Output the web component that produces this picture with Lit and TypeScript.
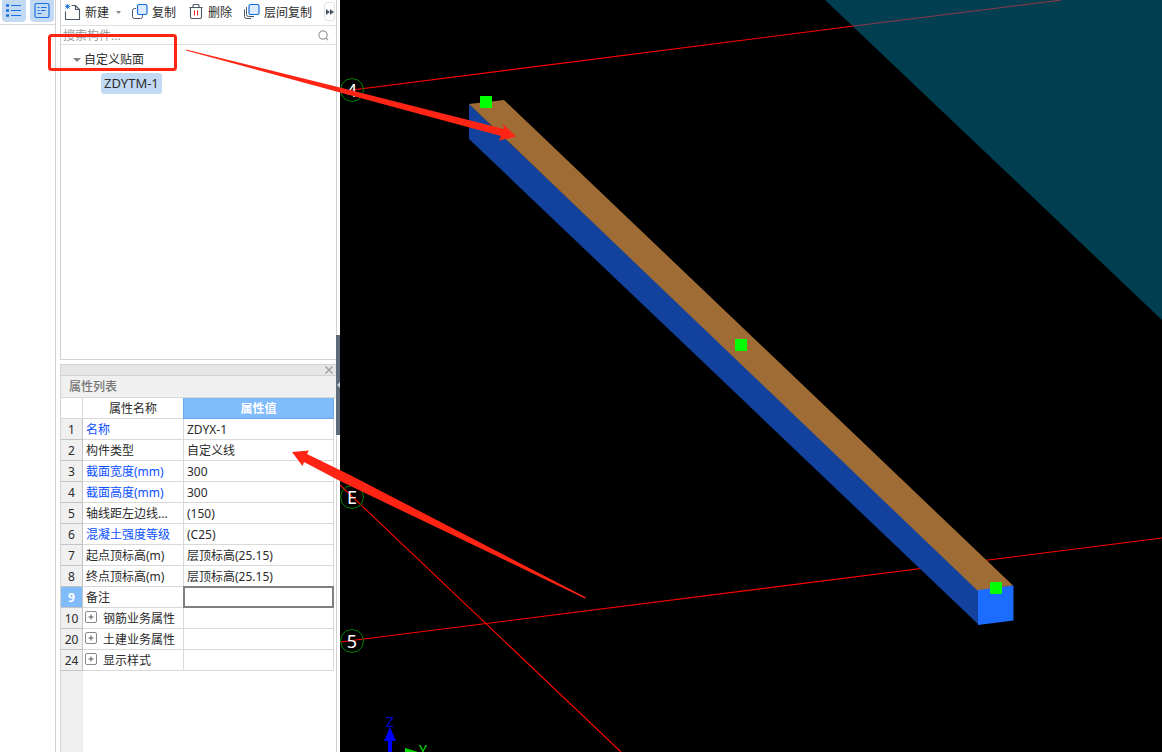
import { LitElement, html, css, svg, nothing } from "lit";
import { customElement, property, state } from "lit/decorators.js";

interface Row {
  no: number;
  name: string;
  value: string;
  key?: boolean;
  group?: boolean;
}

const ROWS: Row[] = [
  { no: 1, name: "名称", value: "ZDYX-1", key: true },
  { no: 2, name: "构件类型", value: "自定义线" },
  { no: 3, name: "截面宽度(mm)", value: "300", key: true },
  { no: 4, name: "截面高度(mm)", value: "300", key: true },
  { no: 5, name: "轴线距左边线...", value: "(150)" },
  { no: 6, name: "混凝土强度等级", value: "(C25)", key: true },
  { no: 7, name: "起点顶标高(m)", value: "层顶标高(25.15)" },
  { no: 8, name: "终点顶标高(m)", value: "层顶标高(25.15)" },
  { no: 9, name: "备注", value: "" },
  { no: 10, name: "钢筋业务属性", value: "", group: true },
  { no: 20, name: "土建业务属性", value: "", group: true },
  { no: 24, name: "显示样式", value: "", group: true },
];

const reset = css`
  * { box-sizing: border-box; }
  button, input {
    font: inherit;
    color: inherit;
    background: none;
    border: 0;
    padding: 0;
    margin: 0;
    outline: 0;
  }
  svg { display: block; flex: none; }
`;

@customElement("view-rail")
class ViewRail extends LitElement {
  static styles = [reset, css`
    :host {
      display: block;
      background: #fff;
      border-right: 1px solid #d2d2d2;
    }
    .bar {
      display: flex;
      gap: 4px;
      height: 25px;
      padding-left: 2px;
      border-bottom: 1px solid #d9d9d9;
    }
    .toggle {
      display: grid;
      place-items: center;
      width: 24px;
      height: 22px;
      border-radius: 0 0 4px 4px;
      background: #c2daf3;
    }
  `];

  render() {
    return html`
      <div class="bar">
        <button class="toggle" aria-label="构件列表" aria-pressed="true">
          <svg width="18" height="20" viewBox="0 0 18 20" fill="none" stroke="#1a6fe0">
            <path d="M1 4.500h3M1 9.500h3M1 14.500h3" stroke-width="2.600" />
            <path d="M6 4.500H16M6 9.500H16M6 14.500H16" />
          </svg>
        </button>
        <button class="toggle" aria-label="属性列表" aria-pressed="true">
          <svg width="16" height="20" viewBox="0 0 16 20" fill="none" stroke="#1a6fe0">
            <rect x="1" y="2.500" width="14" height="14" rx="1.500" stroke-width="1.200" />
            <path d="M3.500 6.500h2M7 6.500h5.500M3.500 9.500h2M7 9.500h4.500M3.500 12.500h4" />
          </svg>
        </button>
      </div>
    `;
  }
}

@customElement("component-list")
class ComponentList extends LitElement {
  static styles = [reset, css`
    :host {
      display: flex;
      flex-direction: column;
      background: #fff;
      border: 1px solid #d2d2d2;
      border-top: 0;
    }
    .tools {
      display: flex;
      align-items: center;
      height: 26px;
      padding-left: 3px;
      border-bottom: 1px solid #e0e0e0;
      white-space: nowrap;
    }
    .tool {
      display: flex;
      align-items: center;
      gap: 4px;
      margin-right: 12px;
    }
    .tool svg { margin-bottom: 2px; }
    .tool.new { margin-right: 11px; }
    .caret {
      width: 5px;
      height: 3px;
      margin-left: 3px;
      background: #888;
      clip-path: polygon(0 0, 100% 0, 50% 100%);
    }
    .more {
      display: grid;
      place-items: center;
      width: 11px;
      height: 19px;
      margin: 0 1px 2px auto;
      border: 1px solid #e4e4e4;
      border-radius: 3px;
    }
    .search {
      display: flex;
      align-items: center;
      height: 19px;
      padding: 1px 7px 0 2px;
      border-bottom: 1px solid #e0e0e0;
    }
    .query { flex: 1; min-width: 0; height: 17px; }
    .query::placeholder { color: #9a9a9a; opacity: 1; }
    .tree {
      margin: 0;
      padding: 5px 0 0 12px;
      list-style: none;
    }
    .parent { display: flex; align-items: center; gap: 3px; height: 20px; }
    .fold {
      width: 8px;
      height: 4px;
      background: #808080;
      clip-path: polygon(0 0, 100% 0, 50% 100%);
    }
    .children { margin: 0; padding: 3px 0 0 28px; list-style: none; }
    .item {
      height: 21px;
      padding: 0 3px;
      border-radius: 3px;
      background: #c2daf3;
      font-size: 13px;
      line-height: 21px;
    }
  `];

  render() {
    return html`
      <div class="tools">
        <button class="tool new">
          <svg width="17" height="18" viewBox="0 0 17 18" fill="none">
            <path d="M7.500 2.500H11.500L15.500 6.500V16.500H1.500V8.500M11.500 2.500V6.500H15.500" stroke="#4b5666" stroke-width="1.100" />
            <path d="M3.500 1v5M1 3.500h5M1.500 1.500l4 4M5.500 1.500l-4 4" stroke="#2273d8" stroke-width=".9" />
          </svg>
          新建<span class="caret"></span>
        </button>
        <button class="tool">
          <svg width="16" height="17" viewBox="0 0 16 17" fill="none">
            <path d="M4 5.500H2.500a2 2 0 0 0-2 2V13.500a2 2 0 0 0 2 2H8.500a2 2 0 0 0 2-2V12" stroke="#4b5666" />
            <rect x="5.500" y="1.500" width="9.500" height="10" rx="1.500" fill="#dcecff" stroke="#1a6fe0" stroke-width="1.200" />
          </svg>
          复制
        </button>
        <button class="tool">
          <svg width="16" height="17" viewBox="0 0 16 17" fill="none">
            <path d="M1.500 4.500h13M5 4V2.500q0-1 1-1H10q1 0 1 1V4M2.500 5V14q0 1.500 1.500 1.500h8q1.500 0 1.500-1.500V5" stroke="#4b5666" stroke-width="1.100" />
            <path d="M6.500 7.500v5M9.500 7.500v5" stroke="#e02020" />
          </svg>
          删除
        </button>
        <button class="tool">
          <svg width="16" height="17" viewBox="0 0 16 17" fill="none">
            <path d="M.5 6.500v7q0 2 2 2H7M2.500 4v7.500q0 2 2 2H10" stroke="#4b5666" />
            <rect x="5" y="1.500" width="10" height="10" rx="1.500" fill="#dcecff" stroke="#1a6fe0" stroke-width="1.200" />
          </svg>
          层间复制
        </button>
        <button class="more" aria-label="更多">
          <svg width="8" height="6" viewBox="0 0 8 6" fill="#4b5666">
            <path d="M0 0l4 3-4 3zM4 0l4 3-4 3z" />
          </svg>
        </button>
      </div>
      <label class="search">
        <input class="query" type="text" placeholder="搜索构件..." aria-label="搜索构件" />
        <svg width="11" height="11" viewBox="0 0 12 12" fill="none" stroke="#9a9a9a" stroke-width="1.300">
          <circle cx="5.500" cy="5.500" r="4.500" /><path d="M8.500 8.500l2.500 2.500" />
        </svg>
      </label>
      <ul class="tree">
        <li>
          <button class="parent" aria-expanded="true"><span class="fold"></span>自定义贴面</button>
          <ul class="children">
            <li><button class="item">ZDYTM-1</button></li>
          </ul>
        </li>
      </ul>
    `;
  }
}

@customElement("property-list")
class PropertyList extends LitElement {
  @state() private current = 9;

  static styles = [reset, css`
    :host {
      display: flex;
      flex-direction: column;
      background: #fff;
      border: 1px solid #d2d2d2;
      border-bottom: 0;
    }
    .grip {
      display: flex;
      align-items: center;
      justify-content: flex-end;
      height: 11px;
      padding-right: 3px;
      background: #e6e6e6;
      border-bottom: 1px solid #d2d2d2;
    }
    .title {
      height: 22px;
      margin: 0;
      padding-left: 8px;
      background: #f0f0f0;
      border-bottom: 1px solid #d9d9d9;
      color: #777;
      font-size: 12px;
      font-weight: 500;
      line-height: 21px;
    }
    .body {
      flex: 1;
      padding-right: 2px;
      background: linear-gradient(90deg, #f0f0f0 22px, #fff 22px);
    }
    .grid {
      width: 100%;
      table-layout: fixed;
      border-collapse: separate;
      border-spacing: 0;
    }
    .c-no { width: 22px; }
    .c-name { width: 101px; }
    th, td {
      height: 21px;
      padding: 2px 3px 0;
      border-right: 1px solid #d9d9d9;
      border-bottom: 1px solid #d9d9d9;
      background: #fff;
      font-weight: 400;
      line-height: 18px;
      text-align: left;
      white-space: nowrap;
    }
    thead th { text-align: center; }
    thead .active {
      background: #80bbfb;
      border-color: #68a8ee;
      box-shadow: -1px 0 #68a8ee;
      color: #fff;
      font-weight: 700;
    }
    tbody th {
      padding: 2px 0 0;
      background: #f0f0f0;
      border-color: #c4c4c4;
      text-align: center;
    }
    tbody .on { background: #80bbfb; color: #fff; font-weight: 700; }
    .key { color: #0a50ff; }
    .edit { padding: 0; }
    .field {
      display: block;
      position: relative;
      width: calc(100% + 2px);
      height: 22px;
      margin: -1px;
      padding: 0 3px;
      border: 2px solid #808080;
    }
    .group { display: flex; align-items: center; gap: 6px; height: 18px; }
    .plus {
      display: grid;
      place-items: center;
      width: 12px;
      height: 12px;
      margin: 0 0 4px -1px;
      border: 1px solid #888;
      border-radius: 2px;
    }
  `];

  private row(r: Row) {
    const on = r.no === this.current;
    return html`
      <tr>
        <th scope="row" class=${on ? "on" : nothing}>${r.no}</th>
        <td class=${r.key ? "key" : nothing}>
          ${r.group
            ? html`<div class="group">
                <button class="plus" aria-label="展开">
                  <svg width="6" height="6" viewBox="0 0 6 6" stroke="#555"><path d="M3 .5v5M.5 3h5" /></svg>
                </button><span>${r.name}</span>
              </div>`
            : r.name}
        </td>
        ${on
          ? html`<td class="edit"><input class="field" type="text" aria-label=${r.name} .value=${r.value} /></td>`
          : html`<td>${r.value}</td>`}
      </tr>
    `;
  }

  render() {
    return html`
      <div class="grip">
        <button aria-label="关闭">
          <svg width="8" height="8" viewBox="0 0 8 8" stroke="#999" stroke-width="1.100"><path d="M.5 .5l7 7M7.500 .5l-7 7" /></svg>
        </button>
      </div>
      <h2 class="title">属性列表</h2>
      <div class="body">
        <table class="grid">
          <colgroup><col class="c-no" /><col class="c-name" /><col /></colgroup>
          <thead>
            <tr><th></th><th>属性名称</th><th class="active">属性值</th></tr>
          </thead>
          <tbody>${ROWS.map((r) => this.row(r))}</tbody>
        </table>
      </div>
    `;
  }
}

@customElement("model-view")
class ModelView extends LitElement {
  static styles = css`
    :host { display: block; min-width: 0; background: #000; overflow: hidden; }
    .scene { display: block; }
    .label {
      fill: #fff;
      font: 18px "Noto Sans", "Open Sans", sans-serif;
      text-anchor: middle;
    }
    .axis { font: 14px "Noto Sans", "Open Sans", sans-serif; text-anchor: middle; }
  `;

  private bubble(text: string, y: number) {
    return svg`
      <path d="M12 ${y - 11.5}l6 1.500 4 4 1.500 6-1.500 6-4 4-6 1.500-6-1.500-4-4-1.500-6 1.500-6 4-4z" fill="none" stroke="#008000" />
      <text class="label" x="12" y=${y + 7}>${text}</text>
    `;
  }

  render() {
    return html`
      <svg class="scene" width="822" height="752" viewBox="0 0 822 752" overflow="visible">
        <path d="M485 0H822V320z" fill="#003e50" />
        <g stroke="#ff0000" stroke-width="1.100" fill="none">
          <path d="M12 90L514 26" />
          <path d="M514 26L722 0" stroke="#8c3848" />
          <path d="M0 642L822 538" />
          <path d="M0 485L281 752" />
        </g>
        ${this.bubble("4", 90)} ${this.bubble("E", 497)} ${this.bubble("5", 641)}
        <path d="M129 104L639 590V625L129 139z" fill="#12429e" />
        <path d="M129 104L164 100L673 585.500L638 591z" fill="#a06c35" />
        <path d="M638 590L673.500 585.500V620.500L638 625z" fill="#1c6cff" />
        <g fill="#00ff00">
          <rect x="140" y="96" width="12" height="12" />
          <rect x="395" y="339" width="12" height="12" />
          <rect x="650" y="582" width="12" height="12" />
        </g>
        <path d="M50 727l6 14h-4v11h-4v-11h-4z" fill="#0000ff" />
        <text class="axis" x="50" y="727" fill="#0000d8">Z</text>
        <path d="M65 748l13 4h-13z" fill="#00d800" />
        <text class="axis" x="83" y="755" fill="#00e000">Y</text>
      </svg>
    `;
  }
}

@customElement("app-root")
class AppRoot extends LitElement {
  @property({ type: Boolean }) marks = true;

  static styles = [reset, css`
    :host {
      display: grid;
      grid-template-columns: 56px 276px minmax(0, 1fr);
      column-gap: 4px;
      position: relative;
      height: 100vh;
      overflow: hidden;
      background: #fff;
      color: #2b2b2b;
      font: 12px/16px "Noto Sans", "Noto Sans CJK SC", sans-serif;
    }
    .panels {
      display: grid;
      grid-template-rows: 360px minmax(0, 1fr);
      row-gap: 4px;
    }
    .splitter {
      position: absolute;
      left: 336px;
      top: 335px;
      display: grid;
      place-items: center end;
      width: 4px;
      height: 100px;
      background: #5f6b7a;
    }
    .marks { position: absolute; inset: 0; pointer-events: none; }
  `];

  render() {
    return html`
      <view-rail></view-rail>
      <div class="panels">
        <component-list></component-list>
        <property-list></property-list>
      </div>
      <model-view></model-view>
      <button class="splitter" aria-label="收起面板">
        <svg width="3" height="6" viewBox="0 0 3 6" fill="#c8ced6"><path d="M3 0v6L0 3z" /></svg>
      </button>
      ${this.marks
        ? html`<svg class="marks" width="600" height="620" viewBox="0 0 600 620" fill="#ff2414">
            <rect x="49.500" y="35.500" width="126" height="34" rx="2" fill="none" stroke="#ff2414" stroke-width="3" />
            <path d="M186 49.500L340 87.500L504 129L503 124L516 136.500L499 140.500L501 136L340 92.500L186 50.500z" />
            <path d="M292 452L309 450.500L307 454L350 475L586 597.500L585 598.500L340 481L304 462L302.500 466z" />
          </svg>`
        : nothing}
    `;
  }
}
